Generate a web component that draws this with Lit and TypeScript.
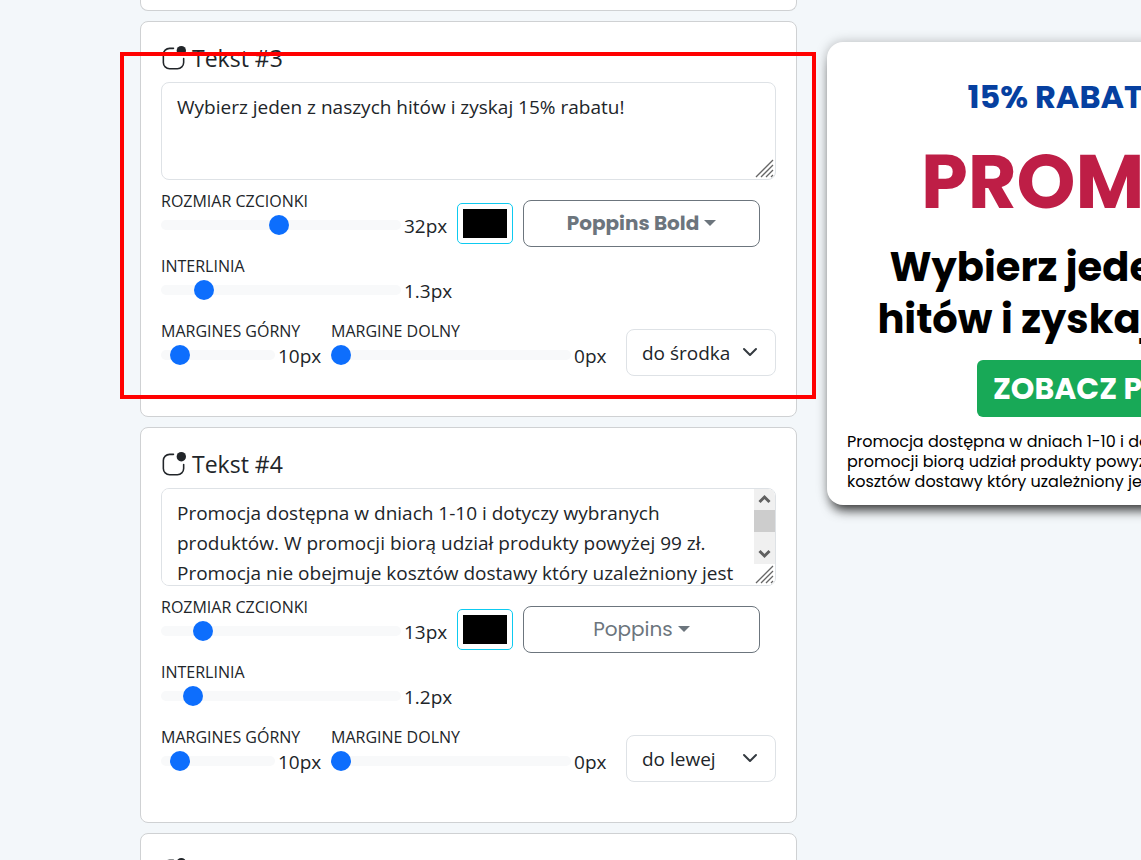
import { LitElement, html, css, svg } from "lit";
import { customElement, property } from "lit/decorators.js";

interface TextBlock {
  id: number;
  text: string;
  size: number;
  leading: number;
  marginTop: number;
  marginBottom: number;
  font: string;
  bold: boolean;
  align: string;
  marked: boolean;
  scrolls: boolean;
}

const BLOCKS: TextBlock[] = [
  {
    id: 3,
    text: "Wybierz jeden z naszych hitów i zyskaj 15% rabatu!",
    size: 32,
    leading: 1.3,
    marginTop: 10,
    marginBottom: 0,
    font: "Poppins Bold",
    bold: true,
    align: "do środka",
    marked: true,
    scrolls: false,
  },
  {
    id: 4,
    text: "Promocja dostępna w dniach 1-10 i dotyczy wybranych produktów. W promocji biorą udział produkty powyżej 99 zł. Promocja nie obejmuje kosztów dostawy który uzależniony jest od wybranej formy dostawy.",
    size: 13,
    leading: 1.2,
    marginTop: 10,
    marginBottom: 0,
    font: "Poppins",
    bold: false,
    align: "do lewej",
    marked: false,
    scrolls: true,
  },
];

const ALIGNMENTS = ["do lewej", "do środka", "do prawej"];

const indicatorIcon = svg`
  <path d="M5.5 2A3.5 3.5 0 0 0 2 5.5v5A3.5 3.5 0 0 0 5.5 14h5a3.5 3.5 0 0 0 3.5-3.5V8a.5.5 0 0 1 1 0v2.5a4.5 4.5 0 0 1-4.5 4.5h-5A4.5 4.5 0 0 1 1 10.5v-5A4.5 4.5 0 0 1 5.5 1H8a.5.5 0 0 1 0 1z"/>
  <path d="M16 3a3 3 0 1 1-6 0 3 3 0 0 1 6 0"/>`;

@customElement("text-block-card")
export class TextBlockCard extends LitElement {
  @property({ attribute: false }) block!: TextBlock;

  static styles = css`
    :host {
      display: block;
      font-family: "Segoe UI", "Open Sans", sans-serif;
      font-size: 19px;
      line-height: 30px;
      color: #212529;
    }
    * {
      box-sizing: border-box;
    }
    .card {
      position: relative;
      padding: 20px 20px 31px;
      background: #fff;
      border: 1px solid #cfd1d3;
      border-radius: 8px;
    }
    .marker {
      position: absolute;
      inset: 30px -20px 17px -21px;
      border: 4px solid #f00;
      pointer-events: none;
    }
    .title {
      display: flex;
      align-items: center;
      gap: 6px;
      margin: 0 0 8px;
      font-size: 23px;
      font-weight: 400;
      line-height: 32px;
    }
    .icon {
      width: 25px;
      height: 25px;
      fill: currentColor;
    }
    .box {
      position: relative;
    }
    .text {
      display: block;
      width: 100%;
      height: 98px;
      padding: 9px 15px;
      border: 1px solid #dee2e6;
      border-radius: 8px;
      background: #fff;
      color: inherit;
      font: inherit;
      resize: none;
    }
    .text.scrolls {
      padding-right: 36px;
    }
    .scrollbar {
      position: absolute;
      top: 1px;
      right: 1px;
      display: flex;
      flex-direction: column;
      width: 21px;
      height: 75px;
      border-top-right-radius: 7px;
      background: #f0f0f0;
      overflow: hidden;
      pointer-events: none;
    }
    .arrow {
      width: 21px;
      height: 21px;
      fill: none;
      stroke: #606060;
      stroke-width: 3;
    }
    .thumb {
      height: 22px;
      background: #cdcdcd;
    }
    .arrow.down {
      margin-top: auto;
    }
    .grip {
      position: absolute;
      right: 1px;
      bottom: 1px;
      width: 21px;
      height: 21px;
      fill: none;
      stroke: #666;
      stroke-width: 1.3;
      pointer-events: none;
    }
    .row {
      display: flex;
      align-items: flex-start;
      gap: 10px;
      height: 65px;
    }
    .rows {
      padding-top: 10px;
    }
    .field {
      display: grid;
      grid-template-columns: 240px 43px;
      column-gap: 3px;
    }
    .field.short {
      grid-template-columns: 114px 43px;
    }
    .field.narrow {
      grid-template-columns: 240px 32px;
    }
    .label {
      grid-column: 1 / -1;
      font-size: 16px;
      line-height: 23px;
      text-transform: uppercase;
      white-space: nowrap;
    }
    .value {
      line-height: 27px;
    }
    .range {
      appearance: none;
      width: 100%;
      height: 24px;
      margin: 0;
      background: none;
    }
    .range::-webkit-slider-runnable-track {
      height: 10px;
      border-radius: 10px;
      background: #f8f9fa;
    }
    .range::-webkit-slider-thumb {
      appearance: none;
      width: 20px;
      height: 20px;
      margin-top: -5px;
      border-radius: 50%;
      background: #0d6efd;
    }
    .swatch {
      width: 56px;
      height: 41px;
      margin: 13px 0 0;
      padding: 5px;
      border: 1px solid #0dcaf0;
      border-radius: 5px;
      background: #fff;
    }
    .swatch::-webkit-color-swatch-wrapper {
      padding: 0;
    }
    .swatch::-webkit-color-swatch {
      border: none;
    }
    .font {
      display: flex;
      align-items: center;
      justify-content: center;
      gap: 5px;
      width: 237px;
      height: 47px;
      margin: 10px 0 0;
      padding: 0 15px 2px;
      border: 1px solid #6c757d;
      border-radius: 8px;
      background: #fff;
      color: #6c757d;
      font-family: "Poppins", "Inter", sans-serif;
      font-size: 20px;
    }
    .font.bold {
      font-weight: 700;
    }
    .caret {
      border: 6px solid transparent;
      border-top-color: currentColor;
      border-bottom: 0;
    }
    .align {
      appearance: none;
      flex: 1;
      height: 47px;
      margin: 9px 0 0 10px;
      padding: 0 40px 0 15px;
      border: 1px solid #dee2e6;
      border-radius: 8px;
      background: #fff url("data:image/svg+xml,%3Csvg xmlns='http://www.w3.org/2000/svg' viewBox='0 0 16 16'%3E%3Cpath fill='none' stroke='%23343a40' stroke-linecap='round' stroke-linejoin='round' stroke-width='2' d='m2 5 6 6 6-6'/%3E%3C/svg%3E") right 17px top 14px / 16px 16px no-repeat;
      color: inherit;
      font: inherit;
    }
  `;

  private slider(
    key: string,
    label: string,
    value: number,
    min: number,
    max: number,
    step: number,
    kind = "",
  ) {
    const id = `${key}-${this.block.id}`;
    return html`
      <div class="field ${kind}">
        <label class="label" for=${id}>${label}</label>
        <input class="range" id=${id} type="range" min=${min} max=${max} step=${step} .value=${String(value)} />
        <output class="value" for=${id}>${value}px</output>
      </div>
    `;
  }

  private scrollbar() {
    return html`
      <div class="scrollbar" aria-hidden="true">
        <svg class="arrow" viewBox="0 0 21 21"><path d="M5.5 13l5-5 5 5" /></svg>
        <div class="thumb"></div>
        <svg class="arrow down" viewBox="0 0 21 21"><path d="M5.5 8l5 5 5-5" /></svg>
      </div>
    `;
  }

  render() {
    const b = this.block;
    return html`
      <section class="card">
        <h5 class="title">
          <svg class="icon" viewBox="0 0 16 16" aria-hidden="true">${indicatorIcon}</svg>
          <span>Tekst #${b.id}</span>
        </h5>
        <div class="box">
          <textarea
            class="text ${b.scrolls ? "scrolls" : ""}"
            aria-label="Tekst #${b.id}"
            .value=${b.text}
          ></textarea>
          ${b.scrolls ? this.scrollbar() : null}
          <svg class="grip" viewBox="0 0 21 21" aria-hidden="true">
            <path d="M2 19L19 2M7 19L19 7M12 19l7-7M17 19l2-2" />
          </svg>
        </div>
        <div class="rows">
          <div class="row">
            ${this.slider("size", "Rozmiar czcionki", b.size, 5, 60, 1)}
            <input class="swatch" type="color" value="#000000" aria-label="Kolor" />
            <button class="font ${b.bold ? "bold" : ""}" type="button">
              <span>${b.font}</span><span class="caret"></span>
            </button>
          </div>
          <div class="row">${this.slider("leading", "Interlinia", b.leading, 1, 3, 0.1)}</div>
          <div class="row">
            ${this.slider("top", "Margines górny", b.marginTop, 0, 100, 1, "short")}
            ${this.slider("bottom", "Margine dolny", b.marginBottom, 0, 100, 1, "narrow")}
            <select class="align" aria-label="Wyrównanie">
              ${ALIGNMENTS.map((a) => html`<option ?selected=${a === b.align}>${a}</option>`)}
            </select>
          </div>
        </div>
        ${b.marked ? html`<div class="marker"></div>` : null}
      </section>
    `;
  }
}

@customElement("promo-preview")
export class PromoPreview extends LitElement {
  static styles = css`
    :host {
      display: block;
      font-family: "Poppins", "Inter", sans-serif;
      color: #000;
      text-align: center;
      white-space: nowrap;
    }
    .sheet {
      padding: 30px 20px 13px;
      border-radius: 16px;
      background: #fff;
      box-shadow: 0 0 12px rgba(0, 0, 0, 0.25), 0 10px 12px -5px rgba(0, 0, 0, 0.75);
    }
    .lead {
      margin: 0;
      font-size: 32px;
      font-weight: 700;
      line-height: 50px;
      color: #0640a0;
    }
    .headline {
      margin: 0;
      font-size: 75px;
      font-weight: 700;
      line-height: 119px;
      color: #be1e46;
    }
    .pitch {
      margin: 0 0 15px;
      font-size: 40px;
      font-weight: 700;
      line-height: 52px;
    }
    .cta {
      display: inline-block;
      padding: 0 16px;
      border-radius: 6px;
      background: #18a957;
      color: #fff;
      font-size: 30px;
      font-weight: 700;
      line-height: 57px;
      text-decoration: none;
      vertical-align: top;
    }
    .terms {
      margin: 15px 0 0;
      font-size: 16px;
      line-height: 20px;
      text-align: left;
    }
  `;

  render() {
    return html`
      <article class="sheet">
        <p class="lead">15% RABATU NA HITY!</p>
        <h1 class="headline">PROMOCJA</h1>
        <p class="pitch">Wybierz jeden z naszych<br />hitów i zyskaj 15% rabatu!</p>
        <a class="cta" href="#">ZOBACZ PRODUKTY</a>
        <p class="terms">
          Promocja dostępna w dniach 1-10 i dotyczy wybranych produktów. W<br />
          promocji biorą udział produkty powyżej 99 zł. Promocja nie obejmuje<br />
          kosztów dostawy który uzależniony jest od wybranej formy dostawy.
        </p>
      </article>
    `;
  }
}

@customElement("app-root")
export class AppRoot extends LitElement {
  static styles = css`
    :host {
      display: block;
      height: 100vh;
      overflow: hidden;
      background: #f3f7fa;
    }
    .page {
      display: grid;
      grid-template-columns: 657px 626px;
      column-gap: 30px;
      align-items: start;
      padding-left: 140px;
    }
    .editor {
      display: flex;
      flex-direction: column;
      gap: 10px;
    }
    .stub {
      box-sizing: border-box;
      padding: 10px 20px 0;
      border: 1px solid #cfd1d3;
      border-radius: 8px;
      background: #fff;
    }
    .stub.above {
      border-top: 0;
      border-radius: 0 0 8px 8px;
    }
    .stub.below {
      padding-top: 24px;
    }
    .icon {
      display: block;
      width: 25px;
      height: 25px;
      fill: #212529;
    }
    .preview {
      padding-top: 42px;
    }
  `;

  render() {
    return html`
      <main class="page">
        <div class="editor">
          <div class="stub above"></div>
          ${BLOCKS.map((b) => html`<text-block-card .block=${b}></text-block-card>`)}
          <div class="stub below">
            <svg class="icon" viewBox="0 0 16 16" aria-hidden="true">${indicatorIcon}</svg>
          </div>
        </div>
        <promo-preview class="preview"></promo-preview>
      </main>
    `;
  }
}
